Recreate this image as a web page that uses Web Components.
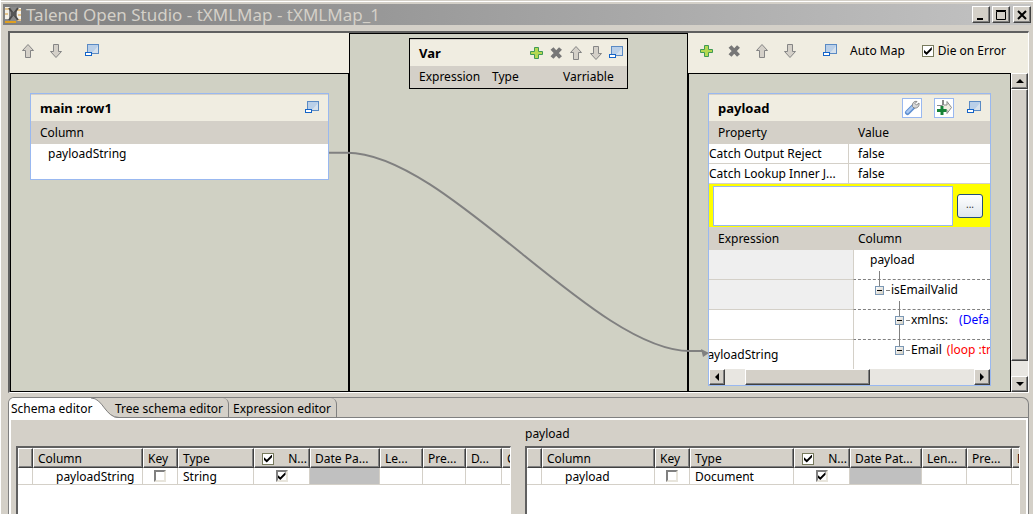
<!DOCTYPE html>
<html lang="en">
<head>
<meta charset="utf-8">
<title>Talend Open Studio - tXMLMap - tXMLMap_1</title>
<style>
  html, body { height: 100%; margin: 0; }
  body {
    --face: #d4d0c8; --cream: #f0ede1; --canvas: #d0d1c4; --blue: #99b8f0;
    --shade: #808080; --dark: #404040;
    font: 12px/20px "Noto Sans", sans-serif; color: #000; background: var(--face);
    overflow: hidden;
  }
</style>
</head>
<body>
<app-window></app-window>
<script>
const ICONS = {
  up: '<path d="M8 1.5L13.5 7.5H10.500V14.500H5.500V7.500H2.500Z" fill="#d4d0c8" stroke="#858585"/>',
  down: '<path d="M8 14.500L2.500 8.500H5.500V1.500H10.500V8.500H13.500Z" fill="#d4d0c8" stroke="#858585"/>',
  win: '<rect x="3.500" y="1.500" width="11" height="9" fill="#b9cfe8" stroke="#5a8ac4"/><path d="M14 3V10H8Z" fill="#d6e1ec"/><rect x="1.500" y="9.500" width="6" height="3" fill="#fff" stroke="#1464c8"/>',
  plus: '<path d="M6.500 2.500H10.500V6.500H14.500V9.500H10.500V13.500H6.500V9.500H2.500V6.500H6.500Z" fill="#b5d951" stroke="#3f9a55"/>',
  cross: '<path d="M4 3.500L12.500 12.500M12.500 3.500L4 12.500" stroke="#777" stroke-width="4"/>',
  wrench: '<path d="M3.500 12.500L9.500 6.500" stroke="#5f8fd0" stroke-width="5" stroke-linecap="round"/><path d="M3.500 12.200L9 6.700" stroke="#a9c8f2" stroke-width="2.500" stroke-linecap="round"/><path d="M8.500 6.500C8 3 10 .8 13 1.500L11 3.500L12.500 5L15 3C15.500 6.500 13.500 8.500 10 8Z" fill="#d8d8d8" stroke="#888"/>',
  output: '<path d="M6.500 0V5.500H1" fill="none" stroke="#8a8a8a"/><path d="M7.500 0V5H11V1.500L15.500 7.500L11 13.500V10H8" fill="#f0ede1" stroke="#8a8a8a"/><path d="M6 6V15M1 10.500H10.500" stroke="#178238" stroke-width="3"/>',
  app: '<rect width="16" height="16" fill="#8a8a8a"/><path d="M0 0H5V2H4V12H0ZM12 1H16V14H12Z" fill="#f3f0e8"/><path d="M0 2H4M0 7H3M12 3H16M13 8H16M12 13H16" stroke="#d89a32"/><path d="M0 15H11" stroke="#e0a020" stroke-width="2"/><path d="M4 1L13 13M13 1L4 13" stroke="#4a4a4a" stroke-width="2"/><path d="M6 5H11V9H6Z" fill="#555"/>'
};

function define(name, css, html) {
  customElements.define(name, class extends HTMLElement {
    constructor() {
      super();
      this.attachShadow({ mode: 'open' });
    }
    connectedCallback() {
      const body = typeof html === 'function' ? html(this) : html;
      this.shadowRoot.innerHTML = `<style>*{box-sizing:border-box}${css}</style>${body}`;
    }
  });
}

define('ui-icon', ':host{display:block;flex:none;width:16px;height:16px}svg{display:block}',
  el => `<svg width="16" height="16" viewBox="0 0 16 16" aria-hidden="true">${ICONS[el.getAttribute('name')]}</svg>`);

define('icon-button', `
  :host{display:block;flex:none}
  button{display:grid;place-items:center;width:16px;height:16px;padding:0;border:0;background:none}
  :host([framed]) button{width:20px;height:20px;border:1px solid var(--blue);background:#fff}`,
  el => `<button type="button" aria-label="${el.getAttribute('label')}"><ui-icon name="${el.getAttribute('name')}"></ui-icon></button>`);

define('check-box', `
  :host{display:block;flex:none}
  label{display:flex;align-items:center;gap:4px;white-space:nowrap}
  input{appearance:none;width:12px;height:12px;margin:0;flex:none;background:#fff;display:grid;place-items:center;
    border:2px solid;border-color:#808080 #e8e5dc #e8e5dc #808080}
  :host([flat]) input{border:1px solid #777a5d}
  input:checked::before{content:"";width:8px;height:8px;background:#000;
    clip-path:polygon(0 35%,35% 65%,100% 0,100% 35%,35% 100%,0 70%)}`,
  el => {
    const on = el.hasAttribute('checked') ? 'checked' : '';
    return el.hasAttribute('label')
      ? `<label><input type="checkbox" ${on} aria-label="${el.getAttribute('label')}"></label>`
      : `<label><input type="checkbox" ${on}><slot></slot></label>`;
  });

define('title-bar', `
  :host{display:flex;align-items:center;gap:5px;height:21px;padding:0 0 0 2px;color:var(--face);
    background:linear-gradient(90deg,#7f7f7f,#c3c3c3)}
  h1{flex:1;margin:0;font-size:17px;font-weight:400;line-height:21px;white-space:nowrap}
  div{display:flex;gap:2px}
  button{width:18px;height:17px;padding:0;border:1px solid;border-color:#fff #404040 #404040 #fff;
    box-shadow:inset -1px -1px #808080;background:var(--face)}
  button:last-child{margin-left:1px}
  svg{display:block;margin:auto}`,
  `<ui-icon name="app"></ui-icon><h1><slot></slot></h1><div>
   <button aria-label="Minimize"><svg width="12" height="12"><path d="M2 10H8" stroke="#000" stroke-width="2"/></svg></button>
   <button aria-label="Maximize"><svg width="12" height="12"><path d="M1.500 2.500H10.500V10.500H1.500ZM1 1.500H11" fill="none" stroke="#000"/></svg></button>
   <button aria-label="Close"><svg width="12" height="12"><path d="M2 2L10 10M10 2L2 10" stroke="#000" stroke-width="2"/></svg></button></div>`);

define('scroll-bar', `
  :host{display:flex;flex-direction:column;flex:none;width:17px;background:#e8e6e1}
  :host([horizontal]){flex-direction:row;width:auto;height:16px}
  button,i{display:grid;place-items:center;flex:none;width:100%;height:16px;padding:0;background:var(--face);
    border:1px solid;border-color:#fff #404040 #404040 #fff;box-shadow:inset -1px -1px #808080}
  :host([horizontal]) button{width:16px}
  i{height:auto;flex:93}
  b{flex:5}
  :host([horizontal]) .lead{flex:20}
  :host([horizontal]) i{height:100%;flex:125}
  :host([horizontal]) b{flex:105}`,
  el => {
    const h = el.hasAttribute('horizontal');
    const arrow = d => `<svg width="8" height="8"><path d="${d}"/></svg>`;
    return `<button aria-label="Back">${arrow(h ? 'M6 0V8L2 4Z' : 'M0 6H8L4 2Z')}</button>${h ? '<b class="lead"></b>' : ''}<i></i><b></b>
      <button aria-label="Forward">${arrow(h ? 'M2 0V8L6 4Z' : 'M0 2H8L4 6Z')}</button>`;
  });

define('map-panel', `
  :host{display:flex;flex-direction:column;min-width:0}
  header{display:flex;align-items:center;gap:12px;height:40px;padding:0 10px 4px;background:var(--cream);white-space:nowrap}
  .row{display:flex;flex:1}
  .canvas{flex:1;min-width:0;padding:19px 19px 5px;border:1px solid #000}
  :host([plain]) header{display:none}
  :host([plain]) .canvas{padding:4px 59px}`,
  `<header><slot name="tools"></slot></header><div class="row"><div class="canvas"><slot></slot></div><slot name="scroll"></slot></div>`);

define('map-card', `
  :host{display:block;border:1px solid var(--blue);background:#fff;overflow:hidden}
  :host([dark]){border-color:#000}
  header{display:flex;align-items:center;gap:12px;height:27px;padding:0 8px 0 9px;background:var(--cream);border-top:1px solid var(--face)}
  :host([dark]) header{gap:4px;padding-right:3px}
  h2{flex:1;margin:0;font-size:13px;line-height:27px;white-space:nowrap}`,
  el => `<header><h2>${el.getAttribute('heading')}</h2><slot name="tools"></slot></header><slot></slot>`);

const TABLE = `:host{display:block}
  table{width:100%;border-collapse:separate;border-spacing:0;table-layout:fixed}
  th{height:23px;padding:0 0 0 9px;background:var(--face);font-weight:400;text-align:left;white-space:nowrap}
  td{padding:0;white-space:nowrap}`;

define('input-columns', `${TABLE} td{height:35px;padding-left:17px;vertical-align:top}`,
  `<table><tr><th>Column</th></tr><tr><td>payloadString</td></tr></table>`);

define('var-columns', `${TABLE} th{height:22px} th+th{padding:0}`,
  `<table><colgroup><col width="82"><col width="71"><col></colgroup><tr><th>Expression</th><th>Type</th><th>Varriable</th></tr></table>`);

define('property-list', `${TABLE}
  td{height:20px;line-height:19px;border-bottom:1px solid var(--face)}
  th+th{padding-left:10px}
  td+td{padding-left:9px;border-left:1px solid var(--face)}`,
  `<table><colgroup><col width="139"><col></colgroup><tr><th>Property</th><th>Value</th></tr>
   <tr><td>Catch Output Reject</td><td>false</td></tr><tr><td>Catch Lookup Inner J...</td><td>false</td></tr></table>`);

define('filter-box', `
  :host{display:flex;align-items:center;gap:4px;height:43px;padding:1px 7px 1px 4px;background:#ff0}
  textarea{flex:1;min-width:0;height:40px;border:1px solid var(--blue);padding:2px;resize:none;background:#fff;font:inherit}
  button{width:26px;height:24px;padding:0 0 4px;border:1px solid #244f78;border-radius:3px;
    background:linear-gradient(#fff,#dfe6ec);font:10px/16px "Noto Sans",sans-serif;color:#333}`,
  `<textarea aria-label="Expression filter"></textarea><button>...</button>`);

define('tree-node', `
  :host{display:flex;align-items:center;height:20px;position:relative;width:max-content}
  button{position:relative;width:9px;height:9px;padding:0;border:1px solid #7b98b5;background:linear-gradient(135deg,#fff,#d0cdc2)}
  button::before{content:"";position:absolute;left:1px;top:3px;width:5px;height:1px;background:#000}
  button::after{content:"";position:absolute;left:3px;bottom:8px;width:1px;height:var(--stem,15px);background:var(--shade)}
  i{width:4px;height:1px;margin:0 1px 0 2px;background:var(--shade)}`,
  el => el.hasAttribute('root') ? '<slot></slot>' : '<button aria-label="Collapse"></button><i></i><slot></slot>');

define('output-tree', `${TABLE}
  td{height:30px;border-bottom:1px solid var(--face)}
  td+td{vertical-align:top;border-left:1px solid var(--face);border-bottom:1px dashed var(--shade)}
  .off{background:#efefef}
  tr:last-child td{border-bottom:0;height:29px}
  .mapped{text-indent:-9px}
  th+th{padding-left:5px}
  .l0{padding-left:16px}.l1{padding-left:21px}.l2{padding-left:41px}
  .long{--stem:21px}
  .def{margin-left:11px;color:#00f}.loop{margin-left:5px;color:#f00}`,
  `<table><colgroup><col width="144"><col></colgroup>
   <tr><th>Expression</th><th>Column</th></tr>
   <tr><td class="off"></td><td class="l0"><tree-node root>payload</tree-node></td></tr>
   <tr><td class="off"></td><td class="l1"><tree-node>isEmailValid</tree-node></td></tr>
   <tr><td></td><td class="l2"><tree-node>xmlns: <span class="def">(Default)</span></tree-node></td></tr>
   <tr><td class="mapped">payloadString</td><td class="l2"><tree-node class="long">Email <span class="loop">(loop :true)</span></tree-node></td></tr></table>`);

define('mapper-view', `
  :host{display:grid;grid-template-columns:minmax(0,339fr) minmax(0,339fr) minmax(0,340fr);position:relative;margin:0 4px 0 7px;background:var(--canvas);
    border:2px solid;border-width:2px 1px 1px 2px;border-color:#606060 #fff #fff #606060}
  .link{position:absolute;inset:0;width:100%;height:100%;pointer-events:none}
  .auto{padding:0;border:0;background:none;font:inherit}
  .gap{margin-left:12px}
  .group{margin-left:8px}
  .wide{margin-left:5px}`,
  `<map-panel>
     <icon-button slot="tools" name="up" label="Move up"></icon-button>
     <icon-button slot="tools" name="down" label="Move down"></icon-button>
     <icon-button slot="tools" name="win" label="Minimize tables" class="group"></icon-button>
     <map-card heading="main :row1"><icon-button slot="tools" name="win" label="Minimize"></icon-button><input-columns></input-columns></map-card>
   </map-panel>
   <map-panel plain>
     <map-card dark heading="Var">
       <icon-button slot="tools" name="plus" label="Add variable"></icon-button>
       <icon-button slot="tools" name="cross" label="Remove variable"></icon-button>
       <icon-button slot="tools" name="up" label="Move up"></icon-button>
       <icon-button slot="tools" name="down" label="Move down"></icon-button>
       <icon-button slot="tools" name="win" label="Minimize"></icon-button>
       <var-columns></var-columns>
     </map-card>
   </map-panel>
   <map-panel>
     <icon-button slot="tools" name="plus" label="Add output"></icon-button>
     <icon-button slot="tools" name="cross" label="Remove output"></icon-button>
     <icon-button slot="tools" name="up" label="Move up"></icon-button>
     <icon-button slot="tools" name="down" label="Move down"></icon-button>
     <icon-button slot="tools" name="win" label="Minimize tables" class="gap"></icon-button>
     <button slot="tools" class="auto">Auto Map</button>
     <check-box slot="tools" flat checked class="wide">Die on Error</check-box>
     <map-card heading="payload">
       <icon-button slot="tools" framed name="wrench" label="Properties"></icon-button>
       <icon-button slot="tools" framed name="output" label="Expression filter"></icon-button>
       <icon-button slot="tools" name="win" label="Minimize"></icon-button>
       <property-list></property-list><filter-box></filter-box><output-tree></output-tree>
       <scroll-bar horizontal></scroll-bar>
     </map-card>
     <scroll-bar slot="scroll"></scroll-bar>
   </map-panel>
   <svg class="link" viewBox="0 0 1018 360" preserveAspectRatio="none" aria-hidden="true">
     <path d="M319 120H337C436 120 584 319 680 319H693" fill="none" stroke="#808080" stroke-width="2"/>
     <path d="M691 317L699 321L693 325Z" fill="#808080"/>
   </svg>`);

define('tab-folder', `
  :host{display:flex;flex-direction:column;flex:1;min-height:0;margin:4px 4px 0 7px;border:1px solid var(--shade);border-bottom:0;border-radius:6px 7px 0 0;overflow:hidden}
  nav{display:flex;height:20px;border-bottom:1px solid var(--shade)}
  button{height:20px;padding:0 5px 0 4px;border:0;border-right:1px solid var(--shade);border-radius:0 6px 0 0;background:none;font:inherit;line-height:22px;white-space:nowrap}
  button:first-child{display:flex;padding:0;border:0;background:linear-gradient(#fff,#fff) 0 0/82px 100% no-repeat}
  button:first-child span{position:relative;z-index:1;width:82px;padding-left:2px;text-align:left}
  svg{display:block;width:28px;height:20px;margin-right:-8px}
  section{flex:1;display:flex;min-height:0;border:2px solid #fff;border-bottom:0}`,
  `<nav role="tablist"><button role="tab" aria-selected="true"><span>Schema editor</span><svg viewBox="0 0 28 20"><path d="M0 0C12 0 14 20 28 20H0Z" fill="#fff"/><path d="M0 0C12 0 14 19.500 28 19.500" fill="none" stroke="#808080"/></svg></button>
   <button role="tab">Tree schema editor</button><button role="tab">Expression editor</button></nav><section><slot></slot></section>`);

define('schema-grid', `
  :host{flex:1;min-width:0;display:flex;flex-direction:column}
  h3{height:26px;margin:0;padding-top:4px;font-size:12px;font-weight:400;line-height:20px}
  .box{flex:1;overflow:hidden;background:#fff;border:2px solid;border-width:2px 1px 0 2px;border-color:#606060 #fff #fff #606060}
  table{border-collapse:separate;border-spacing:0;table-layout:fixed;width:540px}
  th,td{overflow:hidden;white-space:nowrap;text-align:left;font-weight:400}
  th{height:20px;padding:1px 0 0 4px;background:var(--face);border:1px solid;border-color:#fff #404040 #404040 #fff;box-shadow:inset -1px -1px #808080;line-height:17px}
  td{height:17px;padding:1px 0 0 5px;line-height:15px;border-right:1px solid var(--face);border-bottom:1px solid var(--face)}
  td.name{padding-left:23px}
  th.null{padding:1px 2px 0 7px}
  .null div{display:flex;align-items:center;justify-content:space-between}
  td check-box{display:grid;justify-content:center}
  td.k{padding:0}
  .grey{background:silver}`,
  el => {
    const a = n => el.getAttribute(n) || '';
    const [date, len, pre, def, comment] = a('heads').split('|');
    return `<h3>${a('heading')}</h3><div class="box"><table><colgroup>${a('widths').split(',').map(x => `<col style="width:${x}px">`).join('')}</colgroup>
      <tr><th></th><th>Column</th><th>Key</th><th>Type</th><th class="null"><div><check-box flat checked label="Nullable, all rows"></check-box>N...</div></th><th>${date}</th><th>${len}</th><th>${pre}</th><th>${def}</th><th>${comment}</th></tr>
      <tr><td></td><td class="name">${a('name')}</td><td class="k"><check-box label="Key"></check-box></td><td>${a('type')}</td><td class="k"><check-box checked label="Nullable"></check-box></td><td class="grey"></td><td></td><td></td><td></td><td></td></tr></table></div>`;
  });

define('app-window', `
  :host{display:flex;flex-direction:column;height:100%;min-height:0;background:var(--face);border-left:1px solid #fff}
  .edge{height:1px;margin-top:1px;background:#fff;flex:none}
  title-bar{margin:2px 2px 6px}
  .first{margin:0 7px 0 5px}.second{margin:0 6px 0 7px}`,
  `<div class="edge"></div><title-bar>Talend Open Studio - tXMLMap - tXMLMap_1</title-bar>
   <mapper-view></mapper-view>
   <tab-folder>
     <schema-grid class="first" name="payloadString" type="String" widths="15,110,35,76,56,70,43,43,36,56" heads="Date Pa...|Le...|Pre...|D...|C"></schema-grid>
     <schema-grid class="second" heading="payload" name="payload" type="Document" widths="15,113,35,104,56,72,45,45,55,0" heads="Date Pat...|Len...|Pre...|D|"></schema-grid>
   </tab-folder>`);
</script>
</body>
</html>
